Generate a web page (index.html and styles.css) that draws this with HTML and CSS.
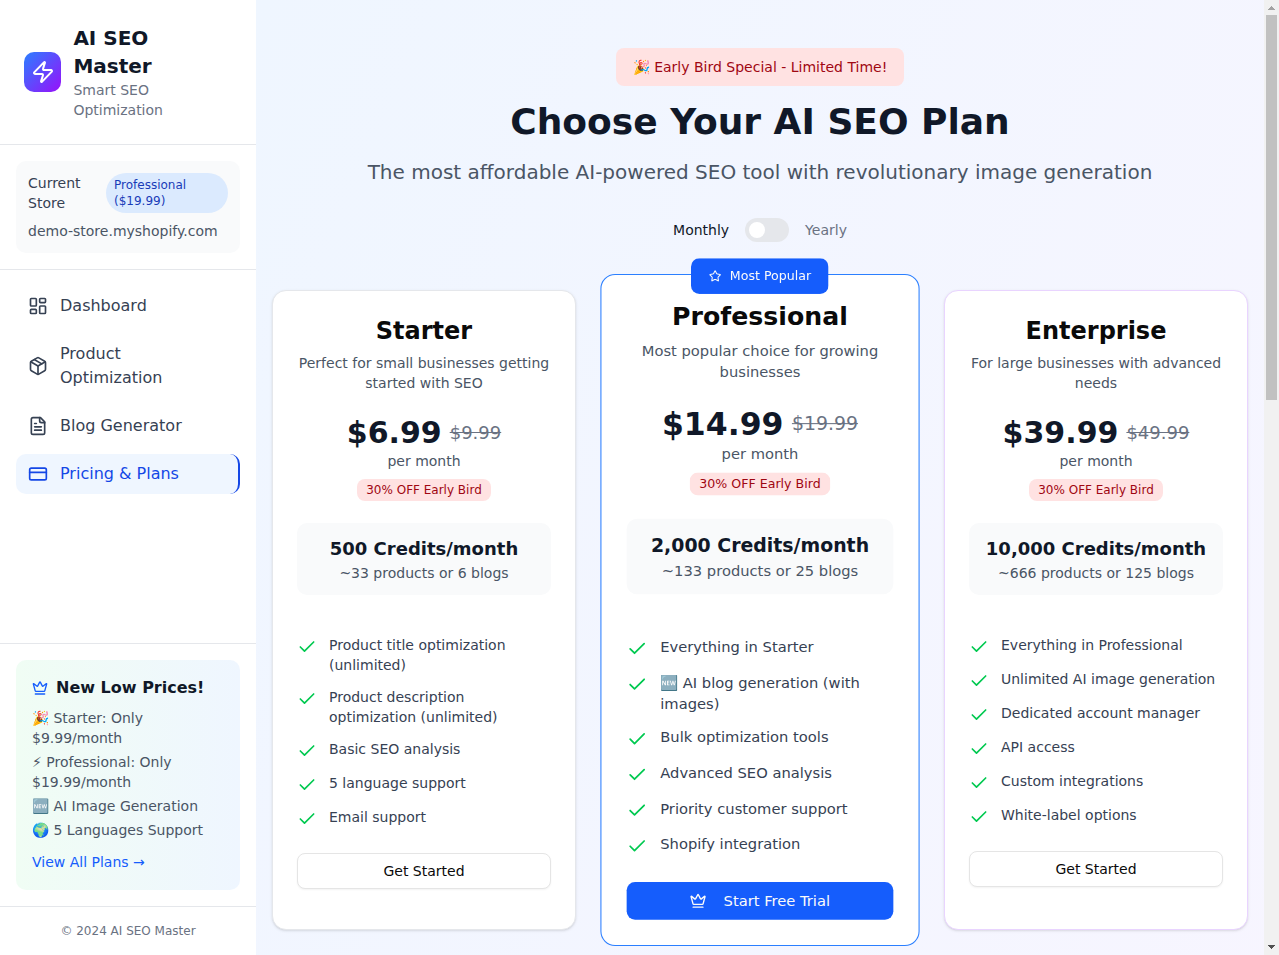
FILE: index.html
```html
<!DOCTYPE html>
<html lang="en">
<head>
<meta charset="utf-8">
<title>AI SEO Master - Pricing</title>
<link rel="stylesheet" href="styles.css">
</head>
<body>
<svg class="defs" width="0" height="0" aria-hidden="true">
  <symbol id="check" viewBox="0 0 24 24"><path d="M20 6 9 17l-5-5"/></symbol>
  <symbol id="crown" viewBox="0 0 24 24"><path d="M11.562 3.266a.5.5 0 0 1 .876 0L15.39 8.87a1 1 0 0 0 1.516.294L21.183 5.5a.5.5 0 0 1 .798.519l-2.834 10.246a1 1 0 0 1-.956.734H5.81a1 1 0 0 1-.957-.734L2.02 6.02a.5.5 0 0 1 .798-.519l4.276 3.664a1 1 0 0 0 1.516-.294z"/><path d="M5 21h14"/></symbol>
</svg>
<div class="app">
  <aside class="sidebar">
    <div class="brand">
      <div class="brand-mark"><svg class="icon i24" viewBox="0 0 24 24"><path d="M4 14a1 1 0 0 1-.78-1.63l9.9-10.2a.5.5 0 0 1 .86.46l-1.92 6.02A1 1 0 0 0 13 10h7a1 1 0 0 1 .78 1.63l-9.9 10.2a.5.5 0 0 1-.86-.46l1.92-6.02A1 1 0 0 0 11 14z"/></svg></div>
      <div class="brand-text"><h1>AI SEO Master</h1><p>Smart SEO Optimization</p></div>
    </div>
    <div class="store">
      <div class="store-box">
        <div class="store-row"><span class="store-label">Current Store</span><span class="store-plan">Professional ($19.99)</span></div>
        <p class="store-url">demo-store.myshopify.com</p>
      </div>
    </div>
    <nav class="nav">
      <a class="nav-item"><svg class="icon i20" viewBox="0 0 24 24"><rect width="7" height="9" x="3" y="3" rx="1"/><rect width="7" height="5" x="14" y="3" rx="1"/><rect width="7" height="9" x="14" y="12" rx="1"/><rect width="7" height="5" x="3" y="16" rx="1"/></svg><span>Dashboard</span></a>
      <a class="nav-item"><svg class="icon i20" viewBox="0 0 24 24"><path d="M11 21.73a2 2 0 0 0 2 0l7-4A2 2 0 0 0 21 16V8a2 2 0 0 0-1-1.73l-7-4a2 2 0 0 0-2 0l-7 4A2 2 0 0 0 3 8v8a2 2 0 0 0 1 1.73z"/><path d="M12 22V12"/><path d="M3.29 7 12 12l8.71-5"/><path d="m7.5 4.27 9 5.15"/></svg><span>Product Optimization</span></a>
      <a class="nav-item"><svg class="icon i20" viewBox="0 0 24 24"><path d="M15 2H6a2 2 0 0 0-2 2v16a2 2 0 0 0 2 2h12a2 2 0 0 0 2-2V7Z"/><path d="M14 2v4a2 2 0 0 0 2 2h4"/><path d="M10 9H8"/><path d="M16 13H8"/><path d="M16 17H8"/></svg><span>Blog Generator</span></a>
      <a class="nav-item active"><svg class="icon i20" viewBox="0 0 24 24"><rect width="20" height="14" x="2" y="5" rx="2"/><path d="M2 10h20"/></svg><span>Pricing &amp; Plans</span></a>
    </nav>
    <div class="promo">
      <div class="promo-box">
        <div class="promo-title"><svg class="icon i16"><use href="#crown"/></svg><span>New Low Prices!</span></div>
        <ul class="promo-list">
          <li>🎉 Starter: Only $9.99/month</li>
          <li>⚡ Professional: Only $19.99/month</li>
          <li>🆕 AI Image Generation</li>
          <li>🌍 5 Languages Support</li>
        </ul>
        <a class="promo-link">View All Plans →</a>
      </div>
    </div>
    <div class="copyright">© 2024 AI SEO Master</div>
  </aside>

  <main class="main">
    <header class="hero">
      <span class="hero-badge">🎉 Early Bird Special - Limited Time!</span>
      <h2>Choose Your AI SEO Plan</h2>
      <p>The most affordable AI-powered SEO tool with revolutionary image generation</p>
      <div class="billing"><span class="on">Monthly</span><span class="switch"></span><span class="off">Yearly</span></div>
    </header>

    <section class="plans">
      <article class="plan">
        <h3>Starter</h3>
        <p class="desc">Perfect for small businesses getting started with SEO</p>
        <div class="price"><span class="now">$6.99</span><span class="was">$9.99</span></div>
        <p class="per">per month</p>
        <span class="off-badge">30% OFF Early Bird</span>
        <div class="credits"><strong>500 Credits/month</strong><span>~33 products or 6 blogs</span></div>
        <ul class="features">
          <li><svg class="icon check"><use href="#check"/></svg><span>Product title optimization (unlimited)</span></li>
          <li><svg class="icon check"><use href="#check"/></svg><span>Product description optimization (unlimited)</span></li>
          <li><svg class="icon check"><use href="#check"/></svg><span>Basic SEO analysis</span></li>
          <li><svg class="icon check"><use href="#check"/></svg><span>5 language support</span></li>
          <li><svg class="icon check"><use href="#check"/></svg><span>Email support</span></li>
        </ul>
        <button class="btn outline">Get Started</button>
      </article>

      <article class="plan popular">
        <span class="popular-badge"><svg class="icon i12" viewBox="0 0 24 24"><path d="M11.525 2.295a.53.53 0 0 1 .95 0l2.31 4.679a2.123 2.123 0 0 0 1.595 1.16l5.166.756a.53.53 0 0 1 .294.904l-3.736 3.638a2.123 2.123 0 0 0-.611 1.878l.882 5.14a.53.53 0 0 1-.771.56l-4.618-2.428a2.122 2.122 0 0 0-1.973 0L6.396 21.01a.53.53 0 0 1-.77-.56l.881-5.139a2.122 2.122 0 0 0-.611-1.879L2.16 9.795a.53.53 0 0 1 .294-.906l5.165-.755a2.122 2.122 0 0 0 1.597-1.16z"/></svg>Most Popular</span>
        <h3>Professional</h3>
        <p class="desc">Most popular choice for growing businesses</p>
        <div class="price"><span class="now">$14.99</span><span class="was">$19.99</span></div>
        <p class="per">per month</p>
        <span class="off-badge">30% OFF Early Bird</span>
        <div class="credits"><strong>2,000 Credits/month</strong><span>~133 products or 25 blogs</span></div>
        <ul class="features">
          <li><svg class="icon check"><use href="#check"/></svg><span>Everything in Starter</span></li>
          <li><svg class="icon check"><use href="#check"/></svg><span>🆕 AI blog generation (with images)</span></li>
          <li><svg class="icon check"><use href="#check"/></svg><span>Bulk optimization tools</span></li>
          <li><svg class="icon check"><use href="#check"/></svg><span>Advanced SEO analysis</span></li>
          <li><svg class="icon check"><use href="#check"/></svg><span>Priority customer support</span></li>
          <li><svg class="icon check"><use href="#check"/></svg><span>Shopify integration</span></li>
        </ul>
        <button class="btn primary"><svg class="icon i16"><use href="#crown"/></svg>Start Free Trial</button>
      </article>

      <article class="plan enterprise">
        <h3>Enterprise</h3>
        <p class="desc">For large businesses with advanced needs</p>
        <div class="price"><span class="now">$39.99</span><span class="was">$49.99</span></div>
        <p class="per">per month</p>
        <span class="off-badge">30% OFF Early Bird</span>
        <div class="credits"><strong>10,000 Credits/month</strong><span>~666 products or 125 blogs</span></div>
        <ul class="features">
          <li><svg class="icon check"><use href="#check"/></svg><span>Everything in Professional</span></li>
          <li><svg class="icon check"><use href="#check"/></svg><span>Unlimited AI image generation</span></li>
          <li><svg class="icon check"><use href="#check"/></svg><span>Dedicated account manager</span></li>
          <li><svg class="icon check"><use href="#check"/></svg><span>API access</span></li>
          <li><svg class="icon check"><use href="#check"/></svg><span>Custom integrations</span></li>
          <li><svg class="icon check"><use href="#check"/></svg><span>White-label options</span></li>
        </ul>
        <button class="btn outline">Get Started</button>
      </article>
    </section>
  </main>

  <div class="scrollbar">
    <svg width="15" height="15" viewBox="0 0 15 15" shape-rendering="crispEdges"><path d="M4 10h7v-1h-1v-1h-1v-1h-1v-1h-1v1h-1v1h-1v1h-1z" fill="#a3a3a3"/></svg>
    <div class="thumb"></div>
    <svg class="down" width="15" height="15" viewBox="0 0 15 15" shape-rendering="crispEdges"><path d="M4 5h7v1h-1v1h-1v1h-1v1h-1v-1h-1v-1h-1v-1h-1z" fill="#505050"/></svg>
  </div>
</div>
</body>
</html>
```

FILE: styles.css
```css
* { box-sizing: border-box; margin: 0; padding: 0; }
body {
  font-family: "DejaVu Sans", sans-serif;
  font-size: 16px;
  line-height: 24px;
  color: #0a0a0a;
  overflow: hidden;
}
ul { list-style: none; }
.defs { position: absolute; }

.icon {
  flex-shrink: 0;
  fill: none;
  stroke: currentColor;
  stroke-width: 2;
  stroke-linecap: round;
  stroke-linejoin: round;
}
.i12 { width: 12px; height: 12px; }
.i16 { width: 16px; height: 16px; }
.i20 { width: 20px; height: 20px; }
.i24 { width: 24px; height: 24px; }

.app { display: flex; height: 955px; overflow: hidden; }

/* Sidebar */
.sidebar { display: flex; flex-direction: column; flex: 0 0 256px; background: #fff; }
.brand { display: flex; align-items: center; gap: 12px; padding: 24px; border-bottom: 1px solid #e5e7eb; }
.brand-mark {
  display: flex; align-items: center; justify-content: center;
  flex: 0 0 37px; height: 40px;
  border-radius: 10px; color: #fff;
  background: linear-gradient(to bottom right, #2b7fff, #9810fa);
}
.brand-mark .icon { margin: 0 -4px; }
.brand-text { margin-left: 0.4px; }
.brand h1 { font-size: 20px; line-height: 28px; color: #101828; }
.brand p { font-size: 14px; line-height: 20px; color: #6a7282; }

.store { padding: 16px; border-bottom: 1px solid #e5e7eb; }
.store-box { padding: 12px; border-radius: 10px; background: #f9fafb; font-size: 14px; line-height: 20px; }
.store-row { display: flex; align-items: center; justify-content: space-between; }
.store-label { width: 60px; color: #364153; }
.store-plan {
  width: 122px; padding: 4px 8px; border-radius: 20px;
  background: #dbeafe; color: #193cb8; font-size: 12px; line-height: 16px;
}
.store-url { margin-top: 8px; color: #4a5565; }

.nav { flex: 1; display: flex; flex-direction: column; gap: 8px; padding: 16px; }
.nav-item { display: flex; align-items: center; gap: 12px; padding: 8px 12px; border-radius: 10px; color: #364153; }
.nav-item.active { background: #eff6ff; color: #1447e6; border-right: 2px solid #1447e6; }

.promo { padding: 16px; border-top: 1px solid #e5e7eb; }
.promo-box { padding: 16px 16px 18px; border-radius: 10px; background: linear-gradient(to right, #f0fdf4, #eff6ff); }
.promo-title { display: flex; align-items: center; gap: 8px; font-weight: 700; color: #101828; }
.promo-title .icon { color: #155dfc; }
.promo-list { display: flex; flex-direction: column; gap: 4px; margin: 8px 0 12px; font-size: 14px; line-height: 20px; color: #4a5565; }
.promo-link { display: block; font-size: 14px; line-height: 20px; color: #155dfc; }
.copyright { padding: 16px; border-top: 1px solid #e5e7eb; text-align: center; font-size: 12px; line-height: 16px; color: #6a7282; }

/* Main */
.main {
  flex: 1; min-width: 0; padding: 48px 16px;
  background: linear-gradient(to bottom right, #eff6ff, #faf5ff) 0 0 / 100% 2289px no-repeat;
}
.hero { display: flex; flex-direction: column; align-items: center; margin-bottom: 48px; }
.hero-badge {
  padding: 8px 16px; border: 1px solid transparent; border-radius: 8px;
  background: #ffe2e2; color: #9f0712; font-size: 14px; line-height: 20px;
}
.hero h2 { margin: 16px 0; font-size: 36px; line-height: 40px; color: #101828; }
.hero p { margin-bottom: 32px; font-size: 20px; line-height: 28px; color: #4a5565; }
.billing { display: flex; align-items: center; gap: 16px; font-size: 14px; line-height: 20px; }
.on { color: #101828; }
.off { color: #6a7282; }
.switch { display: flex; align-items: center; width: 44px; height: 24px; padding: 4px; border-radius: 12px; background: #e5e7eb; }
.switch::before { content: ""; width: 16px; height: 16px; border-radius: 50%; background: #fff; }

.plans { display: grid; grid-template-columns: repeat(3, 1fr); gap: 32px; }
.plan {
  position: relative;
  display: flex; flex-direction: column; align-items: center;
  height: 640px; padding: 24px;
  border: 1px solid #e5e7eb; border-radius: 14px; background: #fff;
  box-shadow: 0 1px 3px rgba(0, 0, 0, .1), 0 1px 2px -1px rgba(0, 0, 0, .1);
  font-size: 14px; line-height: 20px; color: #4a5565;
}
.popular { border-color: #2b7fff; transform: scale(1.05); box-shadow: none; }
.enterprise { border-color: #e9d4ff; }
.plan h3 { margin-bottom: 6px; font-size: 24px; line-height: 32px; color: #0a0a0a; }
.desc { text-align: center; }
.price { display: flex; align-items: center; gap: 8px; margin-top: 22px; }
.now { font-size: 30px; line-height: 36px; font-weight: 700; color: #101828; }
.was { font-size: 18px; line-height: 28px; color: #6a7282; text-decoration: line-through; }
.off-badge {
  margin-top: 8px; padding: 2px 8px; border: 1px solid transparent; border-radius: 8px;
  background: #ffe2e2; color: #9f0712; font-size: 12px; line-height: 16px;
}
.credits {
  display: flex; flex-direction: column; align-items: center; align-self: stretch;
  margin-top: 22px; padding: 12px; border-radius: 10px; background: #f9fafb;
}
.credits strong { font-size: 18px; line-height: 28px; color: #101828; white-space: nowrap; }
.features { display: flex; flex-direction: column; gap: 12px; align-self: stretch; margin: 40px 0 24px; color: #364153; }
.features li { display: flex; align-items: flex-start; gap: 12px; margin-right: -4px; }
.check { width: 20px; height: 20px; margin-top: 2px; color: #00c950; }
.btn {
  display: flex; align-items: center; justify-content: center; gap: 16px; align-self: stretch;
  height: 36px; border-radius: 8px; font: inherit;
}
.outline { border: 1px solid #e5e5e5; background: #fff; color: #0a0a0a; box-shadow: 0 1px 2px rgba(0, 0, 0, .05); }
.primary { border: 0; background: #155dfc; color: #fafafa; }
.popular-badge {
  position: absolute; top: -16px; left: 50%; transform: translateX(-50%);
  display: flex; align-items: center; gap: 8px; white-space: nowrap;
  padding: 8px 16px; border: 1px solid transparent; border-radius: 8px;
  background: #155dfc; color: #fafafa; font-size: 12px; line-height: 16px;
}

/* Scrollbar column */
.scrollbar { display: flex; flex-direction: column; flex: 0 0 15px; background: #f1f1f1; }
.scrollbar svg { display: block; }
.thumb { width: 11px; height: 385px; margin-left: 2px; background: #c1c1c1; }
.down { margin-top: auto; }
```
